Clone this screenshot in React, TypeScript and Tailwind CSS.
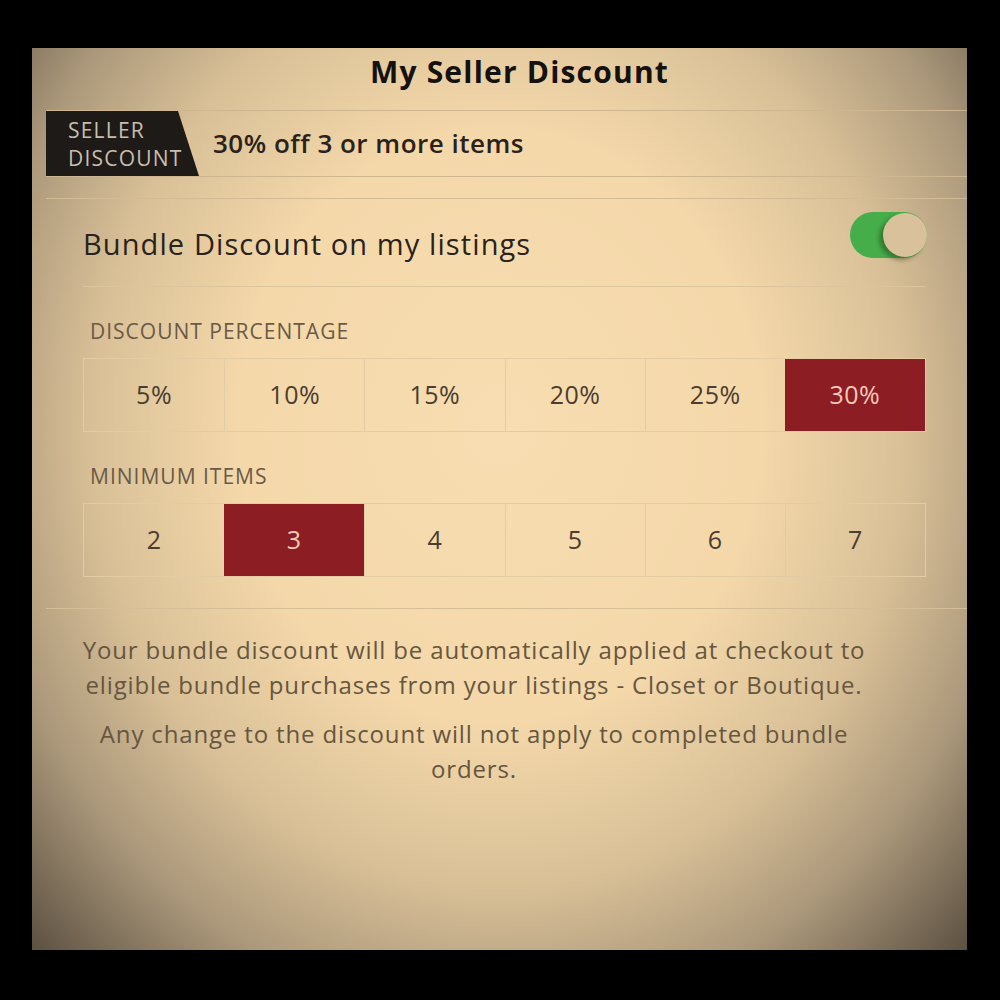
import React from "react";

const percents = ["5%", "10%", "15%", "20%", "25%", "30%"];
const items = ["2", "3", "4", "5", "6", "7"];

function Segmented({ values, selected }: { values: string[]; selected: string }) {
  return (
    <div className="grid grid-cols-6 h-[74px] border border-[#e3cba3]">
      {values.map((v, i) => {
        const sel = v === selected;
        return (
          <div
            key={v}
            className={
              sel
                ? "flex items-center justify-center bg-[#8c1d23] text-[#f3c9bb] text-[25px] tracking-[0.5px]"
                : i === 0
                ? "flex items-center justify-center text-[#4a3d31] text-[25px] tracking-[0.5px]"
                : "flex items-center justify-center border-l border-[#e3cba3] text-[#4a3d31] text-[25px] tracking-[0.5px]"
            }
          >
            {v}
          </div>
        );
      })}
    </div>
  );
}

export default function App() {
  return (
    <div className="w-[1000px] h-[1000px] bg-black pt-[48px] pl-[32px] font-['Open_Sans','Lato',sans-serif]">
      <div className="w-[935px] h-[902px] flex flex-col bg-[radial-gradient(ellipse_70%_82%_at_50%_42%,#f7ddb1_0%,#f4d8aa_40%,#d9c097_62%,#ab987b_80%,#5e5243_100%)]">
        {/* title */}
        <div className="h-[63px] flex items-center justify-center pl-[26px] pb-[14px] border-b border-[#cdb690] ml-[14px]">
          <h1 className="text-[30px] font-bold text-[#15110e] leading-none tracking-[1.2px]">My Seller Discount</h1>
        </div>
        {/* seller discount row */}
        <div className="ml-[14px] h-[66px] flex items-center border-b border-[#cdb690]">
          <div className="h-full w-[153px] bg-[#1d1a17] [clip-path:polygon(0_0,calc(100%-21px)_0,100%_100%,0_100%)] pl-[22px] flex flex-col justify-center text-[#c9bfae] text-[21px] leading-[28px] tracking-[1.2px]">
            <span>SELLER</span>
            <span>DISCOUNT</span>
          </div>
          <span className="ml-[14px] text-[26px] font-semibold text-[#2a221b] tracking-[0.5px]">30% off 3 or more items</span>
        </div>
        <div className="ml-[14px] h-[22px] border-b border-[#d2bb95]" />
        {/* bundle section */}
        <div className="ml-[14px] pl-[37px] pr-[41px] pb-[31px] border-b border-[#d6bf98]">
          <div className="h-[88px] flex items-center justify-between border-b border-[#dcc49d]">
            <span className="text-[29px] text-[#2a221b] pt-[2px] tracking-[1.1px]">Bundle Discount on my listings</span>
            <div className="relative w-[77px] h-[46px] rounded-full bg-[#45ae4a] mr-[-1px] mt-[-16px]">
              <div className="absolute right-0 top-[1px] w-[44px] h-[44px] rounded-full bg-[#d9c29b] shadow-[-4px_3px_4px_rgba(30,60,25,0.45)]" />
            </div>
          </div>
          <div className="pt-[32px] pb-[15px] pl-[7px] leading-[24px] text-[21px] text-[#6a5a47] tracking-[1px]">DISCOUNT PERCENTAGE</div>
          <Segmented values={percents} selected="30%" />
          <div className="pt-[32px] pb-[15px] pl-[7px] leading-[24px] text-[21px] text-[#6a5a47] tracking-[1px]">MINIMUM ITEMS</div>
          <Segmented values={items} selected="3" />
        </div>
        {/* notes */}
        <div className="ml-[34px] w-[816px] pt-[23px] text-center text-[24px] leading-[35px] text-[#66563f] tracking-[0.85px]">
          <p className="whitespace-nowrap">
            Your bundle discount will be automatically applied at checkout to
            <br />
            eligible bundle purchases from your listings - Closet or Boutique.
          </p>
          <p className="mt-[14px] whitespace-nowrap">
            Any change to the discount will not apply to completed bundle
            <br />
            orders.
          </p>
        </div>
      </div>
    </div>
  );
}
